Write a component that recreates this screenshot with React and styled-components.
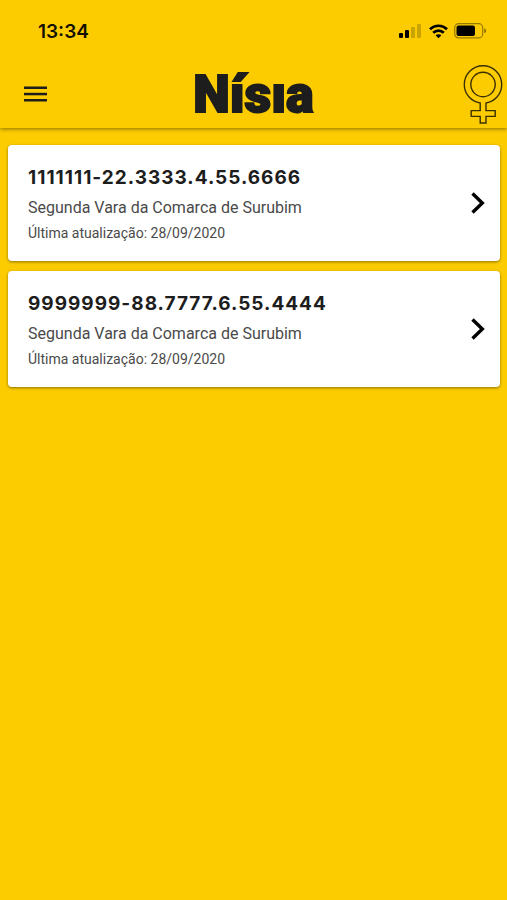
import React from "react"
import styled, { createGlobalStyle } from "styled-components"

const processos = [
    { numero: "1111111-22.3333.4.55.6666", vara: "Segunda Vara da Comarca de Surubim", data: "28/09/2020" },
    { numero: "9999999-88.7777.6.55.4444", vara: "Segunda Vara da Comarca de Surubim", data: "28/09/2020" },
]

const GlobalStyle = createGlobalStyle`
    *,
    *::before,
    *::after {
        box-sizing: border-box;
    }

    body {
        margin: 0;
        background: #fccc00;
        font-family: Roboto, "Liberation Sans", sans-serif;
        color: #1d1d1d;
    }
`

const Cabecalho = styled.header`
    background: #fccc00;
    box-shadow: 0 1px 4px rgba(0, 0, 0, 0.45);
`

const BarraStatus = styled.div`
    display: flex;
    align-items: center;
    justify-content: space-between;
    height: 62px;
    padding: 0 20px 0 38px;
`

const Hora = styled.span`
    font-family: Inter, sans-serif;
    font-size: 19px;
    font-weight: 600;
    color: #141000;
`

const Indicadores = styled.div`
    display: flex;
    align-items: center;
    gap: 6px;

    svg {
        display: block;
    }
`

const BarraApp = styled.div`
    display: grid;
    grid-template-columns: 1fr auto 1fr;
    align-items: center;
    height: 66px;
    padding: 0 4px 2px;
`

const BotaoMenu = styled.button`
    display: flex;
    justify-self: start;
    padding: 8px 20px;
    border: 0;
    background: none;
    color: #1d1d1d;
    cursor: pointer;
`

const Logo = styled.h1`
    margin: 0;
    padding-top: 2px;
    font-size: 52px;
    font-weight: 900;
    line-height: 62px;
    color: #1d1d1d;
    -webkit-text-stroke: 2px #1d1d1d;
`

const Simbolo = styled.svg`
    display: block;
    justify-self: end;
`

const Lista = styled.ul`
    display: flex;
    flex-direction: column;
    gap: 10px;
    margin: 0;
    padding: 17px 7px 17px 8px;
    list-style: none;
`

const Cartao = styled.a`
    display: flex;
    align-items: center;
    justify-content: space-between;
    padding: 15px 14px 15px 20px;
    border-radius: 4px;
    background: #fff;
    box-shadow: 0 1px 3px rgba(0, 0, 0, 0.45);
    color: inherit;
    text-decoration: none;
`

const Numero = styled.h2`
    margin: 0;
    font-family: Inter, sans-serif;
    font-size: 19px;
    font-weight: 700;
    line-height: 35px;
    letter-spacing: 1px;
`

const Vara = styled.p`
    margin: 0;
    font-size: 16px;
    line-height: 26px;
    color: #4a4a4a;
`

const Atualizacao = styled.p`
    margin: 0;
    font-size: 14px;
    line-height: 25px;
    color: #4a4a4a;
`

const Sinal = () => (
    <svg width="24" height="16" viewBox="0 0 24 16" aria-hidden="true">
        <rect x="0" y="10" width="4" height="5" rx="1" />
        <rect x="6" y="7" width="4" height="8" rx="1" />
        <rect x="12" y="4" width="4" height="11" rx="1" opacity="0.2" />
        <rect x="18" y="1" width="4" height="14" rx="1" opacity="0.2" />
    </svg>
)

const Wifi = () => (
    <svg width="19" height="15" viewBox="0 0 19 15" fill="none" stroke="#000" strokeWidth="2.7" aria-hidden="true">
        <path d="M1 5.2C5.8.6 13.2.6 18 5.2" />
        <path d="M4.2 8.8C7.2 5.9 11.8 5.9 14.8 8.8" />
        <path d="M9.5 14.2 6.6 11.3C8.2 9.8 10.8 9.8 12.4 11.3Z" fill="#000" stroke="none" />
    </svg>
)

const Bateria = () => (
    <svg width="33" height="16" viewBox="0 0 33 16" aria-hidden="true">
        <rect x="0.7" y="0.7" width="28" height="14.2" rx="4" fill="none" stroke="#000" strokeOpacity="0.4" strokeWidth="1.2" />
        <rect x="2.5" y="2.5" width="18.5" height="10.6" rx="2" />
        <path d="M30.3 5.3C32.6 6.2 32.6 9.4 30.3 10.3Z" opacity="0.5" />
    </svg>
)

const Menu = () => (
    <svg width="23" height="16" viewBox="0 0 23 16" fill="currentColor" aria-hidden="true">
        <rect y="0.5" width="23" height="2.5" />
        <rect y="6.8" width="23" height="2.5" />
        <rect y="13" width="23" height="2.5" />
    </svg>
)

const Venus = () => (
    <Simbolo width="40" height="60" viewBox="0 0 40 60" fill="none" stroke="#3a3000" strokeWidth="1.4" aria-hidden="true">
        <circle cx="20" cy="20.5" r="12.2" />
        <path d="M17.2 46.6H8.2V52.4H17.2V59H23V52.4H32.2V46.6H23V39C32 37.4 38.7 30 38.7 20.7C38.7 10.2 30.4 1.7 20 1.7S1.3 10.2 1.3 20.7C1.3 30 8.2 37.4 17.2 39Z" />
    </Simbolo>
)

const Seta = () => (
    <svg width="16" height="24" viewBox="0 0 16 24" fill="none" stroke="#000" strokeWidth="3.4" aria-hidden="true">
        <path d="M2.5 2.5 12.3 12 2.5 21.5" />
    </svg>
)

const App = () => {
    return (
        <>
            <GlobalStyle />
            <Cabecalho>
                <BarraStatus>
                    <Hora>13:34</Hora>
                    <Indicadores>
                        <Sinal />
                        <Wifi />
                        <Bateria />
                    </Indicadores>
                </BarraStatus>
                <BarraApp>
                    <BotaoMenu type="button" aria-label="Menu">
                        <Menu />
                    </BotaoMenu>
                    <Logo>Nísıa</Logo>
                    <Venus />
                </BarraApp>
            </Cabecalho>
            <main>
                <Lista>
                    {processos.map(processo => (
                        <li key={processo.numero}>
                            <Cartao href={`#${processo.numero}`}>
                                <div>
                                    <Numero>{processo.numero}</Numero>
                                    <Vara>{processo.vara}</Vara>
                                    <Atualizacao>Última atualização: {processo.data}</Atualizacao>
                                </div>
                                <Seta />
                            </Cartao>
                        </li>
                    ))}
                </Lista>
            </main>
        </>
    )
}

export default App
